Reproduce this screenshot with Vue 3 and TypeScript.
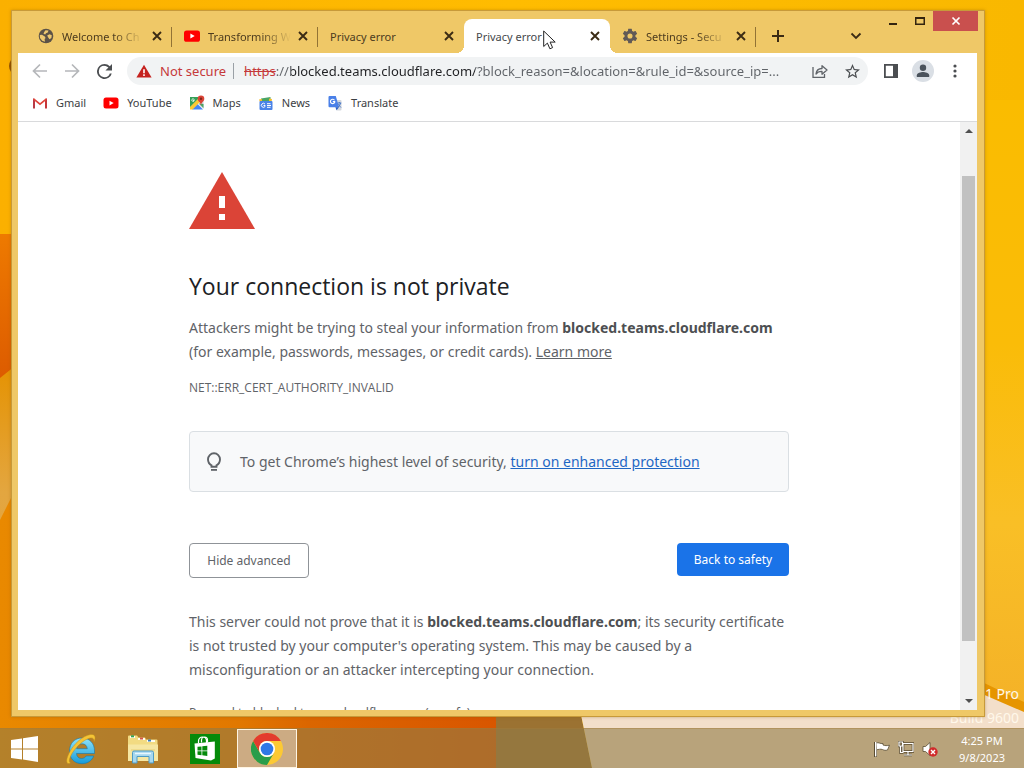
<script setup lang="ts">
interface Tab {
  title: string
  icon: 'globe' | 'youtube' | 'gear' | null
  active?: boolean
  divider?: boolean
}

const tabs: Tab[] = [
  { title: 'Welcome to Ch', icon: 'globe', divider: true },
  { title: 'Transforming W', icon: 'youtube', divider: true },
  { title: 'Privacy error', icon: null },
  { title: 'Privacy error', icon: null, active: true },
  { title: 'Settings - Secu', icon: 'gear', divider: true },
]

const bookmarks = ['Gmail', 'YouTube', 'Maps', 'News', 'Translate']
const address = '://blocked.teams.cloudflare.com/?block_reason=&location=&rule_id=&source_ip=...'
</script>

<template>
  <div class="desktop">
    <svg class="wallpaper" viewBox="0 0 1024 768" preserveAspectRatio="none" aria-hidden="true">
      <defs>
        <linearGradient id="sky" x1="0" y1="0" x2="1" y2="0">
          <stop offset="0" stop-color="#fbb000" />
          <stop offset=".5" stop-color="#ffbc00" />
          <stop offset="1" stop-color="#f9b800" />
        </linearGradient>
        <linearGradient id="glow" x1="0" y1="0" x2="0" y2="1">
          <stop offset="0" stop-color="#fabc00" />
          <stop offset=".4" stop-color="#fabc08" />
          <stop offset=".7" stop-color="#f9bf26" />
          <stop offset="1" stop-color="#f4b228" />
        </linearGradient>
        <linearGradient id="leaf" x1="0" y1="0" x2="0" y2="1">
          <stop offset="0" stop-color="#ee7a00" />
          <stop offset="1" stop-color="#dc5a00" />
        </linearGradient>
        <linearGradient id="low" x1="0" y1="0" x2="0" y2="1">
          <stop offset="0" stop-color="#e59200" />
          <stop offset=".55" stop-color="#e3a640" />
          <stop offset="1" stop-color="#e5a23c" />
        </linearGradient>
        <linearGradient id="floor" x1="0" y1="0" x2="1" y2="0">
          <stop offset="0" stop-color="#e98900" />
          <stop offset=".48" stop-color="#e17800" />
          <stop offset=".62" stop-color="#db6600" />
          <stop offset="1" stop-color="#d95600" />
        </linearGradient>
      </defs>
      <rect width="1024" height="768" fill="url(#sky)" />
      <path d="M0 234 L20 234 V371 L0 384Z" fill="url(#leaf)" />
      <path d="M0 378 L20 362 V600 H0Z" fill="url(#low)" />
      <path d="M0 520 L20 480 V712 H497 V768 H0Z" fill="url(#floor)" />
      <path d="M11 60 q-4 6 0 12z" fill="#915000" />
      <path d="M496 710 H580 L592 768 H496Z" fill="#9b7232" />
      <path d="M578 700 H970 V670 H1024 V768 H592Z" fill="#f3dfca" />
      <path d="M980 100 H1024 V706 L980 690Z" fill="url(#glow)" />
      <path d="M980 681 L1024 702 V712 L980 693Z" fill="#e69500" />
    </svg>

    <div class="watermark"><span>Windows 8.1 Pro</span><span>Build 9600</span></div>

    <main class="window">
      <header class="titlebar">
        <div class="tabs" role="tablist">
          <div v-for="(tab, i) in tabs" :key="i" class="tab" :class="{ active: tab.active, divider: tab.divider }">
            <button class="tab-main" role="tab" :aria-selected="!!tab.active">
              <svg v-if="tab.icon === 'globe'" class="fav" viewBox="0 0 16 16">
                <circle cx="8" cy="8" r="7.3" fill="#5b5247" />
                <path d="M1.800 7 4 6.800 6.800 8.500 7.600 10 6.600 11 7 13.800 4.200 12.800 2 10Z M7.500 2.200 10.500 2.600 9.800 4.600 8 5.200 7.200 6.500 5.500 5.800 6.200 4Z M9.200 7.600 11.500 6.200 13.800 7.200 13.400 10 11.500 11.200 10.200 9.600Z" fill="#edc870" />
              </svg>
              <svg v-else-if="tab.icon === 'youtube'" class="fav" viewBox="0 0 16 16">
                <rect y="2.4" width="16" height="11.4" rx="2.6" fill="#f00" />
                <path d="M6.4 5.6v5l4.3-2.5z" fill="#fff" />
              </svg>
              <svg v-else-if="tab.icon === 'gear'" class="fav" viewBox="1 1 22 22">
                <path fill="#625a56" d="M19.43 12.98c.04-.32.07-.64.07-.98s-.03-.66-.07-.98l2.11-1.65c.19-.15.24-.42.12-.64l-2-3.46c-.12-.22-.39-.3-.61-.22l-2.49 1c-.52-.4-1.08-.73-1.69-.98l-.38-2.65A.49.49 0 0 0 14 2h-4c-.25 0-.46.18-.49.42l-.38 2.65c-.61.25-1.17.59-1.69.98l-2.49-1c-.23-.09-.49 0-.61.22l-2 3.46c-.13.22-.07.49.12.64l2.11 1.65c-.04.32-.07.65-.07.98s.03.66.07.98l-2.11 1.65c-.19.15-.24.42-.12.64l2 3.46c.12.22.39.3.61.22l2.49-1c.52.4 1.08.73 1.69.98l.38 2.65c.03.24.24.42.49.42h4c.25 0 .46-.18.49-.42l.38-2.65c.61-.25 1.17-.59 1.69-.98l2.49 1c.23.09.49 0 .61-.22l2-3.46c.12-.22.07-.49-.12-.64zM12 15.500a3.500 3.500 0 1 1 0-7 3.500 3.500 0 0 1 0 7z" />
              </svg>
              <span class="tab-title" :class="{ faded: tab.icon }">{{ tab.title }}</span>
            </button>
            <button class="tab-close" :aria-label="`Close ${tab.title}`">
              <svg viewBox="0 0 10 10" width="10" height="10"><path d="M1 1l8 8M9 1L1 9" stroke="currentColor" stroke-width="1.9" /></svg>
            </button>
          </div>
        </div>
        <button class="new-tab" aria-label="New tab">
          <svg viewBox="0 0 12 12" width="12" height="12"><path d="M6 0v12M0 6h12" stroke="#3b2b14" stroke-width="2" /></svg>
        </button>
        <button class="search-tabs" aria-label="Search tabs">
          <svg viewBox="0 0 12 8" width="12" height="8"><path d="M1.5 1.5 6 6l4.500-4.500" fill="none" stroke="#3b2b14" stroke-width="1.800" /></svg>
        </button>
        <div class="controls">
          <button aria-label="Minimize"><svg viewBox="0 0 12 10" width="12" height="10"><path d="M2 7h8v2H2z" fill="#33240f" /></svg></button>
          <button aria-label="Maximize"><svg viewBox="0 0 12 10" width="12" height="10"><path d="M1 1h10v8H1zM2.500 3v4.500h7V3z" fill="#33240f" fill-rule="evenodd" /></svg></button>
          <button class="close" aria-label="Close"><svg viewBox="0 0 10 10" width="10" height="10"><path d="M1.500 1.500l7 7M8.500 1.500l-7 7" stroke="#fff" stroke-width="1.700" /></svg></button>
        </div>
      </header>

      <div class="client">
        <nav class="toolbar">
          <button class="tool" aria-label="Back"><svg viewBox="0 0 16 16" width="16" height="16"><path d="M15 8H2M8 1.500 1.500 8 8 14.500" fill="none" stroke="#b5b7ba" stroke-width="1.700" /></svg></button>
          <button class="tool" aria-label="Forward"><svg viewBox="0 0 16 16" width="16" height="16"><path d="M1 8h13M8 1.500 14.500 8 8 14.500" fill="none" stroke="#b5b7ba" stroke-width="1.700" /></svg></button>
          <button class="tool" aria-label="Reload"><svg viewBox="4 4 16 16" width="15" height="15"><path fill="#4b4e51" d="M17.650 6.350A7.960 7.960 0 0 0 12 4a8 8 0 1 0 7.730 10h-2.080A6 6 0 1 1 12 6c1.660 0 3.140.690 4.220 1.780L13 11h7V4z" /></svg></button>
          <div class="omnibox">
            <button class="insecure">
              <svg viewBox="0 0 16 14" width="16" height="14"><path d="M8 .8 15.600 13.500H.4z" fill="#c5221f" /><path d="M7.200 5.300h1.600v4H7.200zM7.200 10.300h1.600v1.600H7.200z" fill="#fff" /></svg>
              <span>Not secure</span>
            </button>
            <span class="scheme">https</span>
            <input class="address" type="text" :value="address" aria-label="Address and search bar" spellcheck="false" />
            <button class="tool" aria-label="Share"><svg viewBox="0 0 16 16" width="16" height="16" fill="none" stroke="#5f6368" stroke-width="1.300"><path d="M1 4v10.300h11.500V11" /><path d="M4 11c.4-3.500 2.500-5.400 6-5.500V2.700L15 7l-5 4.200V8.400C7.300 8.300 5.500 9 4 11z" stroke-linejoin="round" /></svg></button>
            <button class="tool" aria-label="Bookmark this tab"><svg viewBox="2 2 20 20" width="15" height="15"><path fill="#4b4e51" d="m22 9.240-7.190-.620L12 2 9.190 8.630 2 9.240l5.460 4.730L5.820 21 12 17.270 18.180 21l-1.630-7.030zM12 15.400l-3.760 2.270 1-4.280-3.320-2.880 4.380-.380L12 6.100l1.710 4.040 4.380.380-3.320 2.880 1 4.280z" /></svg></button>
          </div>
          <button class="tool" aria-label="Side panel"><svg viewBox="0 0 14 14" width="14" height="14"><path d="M0 0h14v14H0zM1.800 1.800v10.400H9V1.800z" fill="#4b4e51" fill-rule="evenodd" /></svg></button>
          <button class="tool" aria-label="Profile"><svg viewBox="0 0 22 22" width="22" height="22"><circle cx="11" cy="11" r="11" fill="#dadfe5" /><circle cx="11" cy="7.800" r="3.200" fill="#4b535c" /><path d="M4.800 17v-1.700c0-2.100 4.100-3.200 6.200-3.200s6.200 1.100 6.200 3.200V17z" fill="#4b535c" /></svg></button>
          <button class="tool" aria-label="Menu"><svg viewBox="0 0 4 14" width="4" height="14" fill="#4b4e51"><circle cx="2" cy="2" r="1.600" /><circle cx="2" cy="7" r="1.600" /><circle cx="2" cy="12" r="1.600" /></svg></button>
        </nav>

        <nav class="bookmarks">
          <a v-for="name in bookmarks" :key="name" href="#">
            <svg v-if="name === 'Gmail'" viewBox="0 0 16 16"><path d="M1 13.500V3.500h1L3 5v8.500z" fill="#b93a45" /><path d="M15 13.500V3.500h-1L13 5v8.500z" fill="#c5363a" /><path d="M1.500 3.900 8 9.200l6.500-5.300" fill="none" stroke="#e0453b" stroke-width="1.700" /></svg>
            <svg v-else-if="name === 'YouTube'" viewBox="0 0 16 16"><rect x=".5" y="2.600" width="15" height="11" rx="2.500" fill="#f00" /><path d="M6.500 5.700v4.800l4.200-2.400z" fill="#fff" /></svg>
            <svg v-else-if="name === 'Maps'" viewBox="0 0 16 16"><path d="M1 2h10.500L1 12.500z" fill="#35a058" /><path d="M14.500 5v9L9 9z" fill="#cfd4da" /><path d="M3 14.500 8.500 9l5.500 5.500z" fill="#4285f4" /><path d="M1 12 10 3l2.500 2.500L3.500 14.500H1z" fill="#fbc932" /><path d="M10 8.500 14.500 13V9z" fill="#4aa564" /><path d="M12 .5a3.300 3.300 0 0 1 3.300 3.300C15.300 6.500 12.400 7 12 10.500 11.600 7 8.700 6.500 8.700 3.800A3.300 3.300 0 0 1 12 .5z" fill="#db4437" /><circle cx="12" cy="3.800" r="1.200" fill="#80261c" /><path d="M6 5H4.500v.9h.6A1.300 1.300 0 1 1 4.800 4" fill="none" stroke="#fff" stroke-width=".8" /></svg>
            <svg v-else-if="name === 'News'" viewBox="0 0 16 16"><path d="M3 3.500 12.500 2V6H3z" fill="#4aa564" /><path d="M1 4.500l3-.5v3H2zM11 3.500l3 .5-.5 3H11z" fill="#f6bd2a" /><rect x="1.500" y="6" width="13" height="9" rx="1" fill="#4a83e8" /><path d="M7 9.100A2 2 0 1 0 7.100 11.400V10.500H5.500M9 8.700h3.500M9 10.500h4M9 12.300h3.500" fill="none" stroke="#fff" stroke-width="1" /></svg>
            <svg v-else viewBox="0 0 16 16"><path d="M6 5h7.500a1 1 0 0 1 1 1v8.500a1 1 0 0 1-1 1H9.500z" fill="#d3d8de" /><path d="M2.500 1h6.300L12 12.200H2.500a1 1 0 0 1-1-1V2a1 1 0 0 1 1-1z" fill="#4a80e8" /><path d="M8.500 12.200H12L9.500 15.300z" fill="#2b5fc7" /><path d="M7.500 5.200A2.200 2.200 0 1 0 7.700 7.200V6.600H5.800" fill="none" stroke="#fff" stroke-width="1.100" /><path d="M10.500 8h3.800M12.300 7v1M13.600 8c-.4 1.800-1.300 3-2.400 4M11.500 9c.5 1.500 1.300 2.600 2.500 3.500" fill="none" stroke="#4a78c8" stroke-width="1" /></svg>
            <span>{{ name }}</span>
          </a>
        </nav>

        <div class="viewport">
          <article class="page">
            <div class="interstitial">
              <svg class="warning" viewBox="0 0 66 58" width="66" height="58"><path d="M33 0 66 57H0z" fill="#db4437" /><path d="M30 24h6v12h-6zM30 42h6v6h-6z" fill="#fff" /></svg>
              <h1>Your connection is not private</h1>
              <p>Attackers might be trying to steal your information from <strong>blocked.teams.cloudflare.com</strong><br />(for example, passwords, messages, or credit cards). <a href="#">Learn more</a></p>
              <p class="code">NET::ERR_CERT_AUTHORITY_INVALID</p>
              <div class="tip">
                <svg viewBox="0 0 14 20" width="14" height="20"><path d="M4.500 13.300C2.300 12.200 1 10.300 1 7.300a6 6 0 0 1 12 0c0 3-1.300 4.900-3.500 6v1.500h-5z" fill="none" stroke="#5f6368" stroke-width="1.900" /><path d="M4 17h6v1.800H4z" fill="#5f6368" /></svg>
                <span>To get Chrome’s highest level of security, <a href="#">turn on enhanced protection</a></span>
              </div>
              <div class="actions">
                <button class="secondary">Hide advanced</button>
                <button class="primary">Back to safety</button>
              </div>
              <p>This server could not prove that it is <strong>blocked.teams.cloudflare.com</strong>; its security certificate<br />is not trusted by your computer's operating system. This may be caused by a<br />misconfiguration or an attacker intercepting your connection.</p>
              <p class="proceed"><a href="#">Proceed to blocked.teams.cloudflare.com (unsafe)</a></p>
            </div>
          </article>
          <div class="scrollbar">
            <button aria-label="Scroll up"><svg viewBox="0 0 8 4" width="8" height="4"><path d="M4 0 8 4H0z" fill="#505050" /></svg></button>
            <div class="track"><div class="thumb"></div></div>
            <button aria-label="Scroll down"><svg viewBox="0 0 8 4" width="8" height="4"><path d="M0 0h8L4 4z" fill="#505050" /></svg></button>
          </div>
        </div>
      </div>
    </main>

    <footer class="taskbar">
      <button class="start" aria-label="Start"><svg viewBox="0 0 27 26" width="27" height="26" fill="#fff"><path d="M0 4 11 2.400V12.400H0zM12 2.200 27 0V12.400H12zM0 13.400h11v10L0 22zM12 13.400h15V26L12 23.600z" /></svg></button>
      <button class="app" aria-label="Internet Explorer">
        <svg viewBox="0 0 32 32" width="32" height="32">
          <defs><linearGradient id="ie" x1="0" y1="0" x2="0" y2="1"><stop offset="0" stop-color="#8fe3fb" /><stop offset="1" stop-color="#169bd9" /></linearGradient></defs>
          <path d="M29.500 20.500H11.500c.2 3.200 2.200 5 5 5 2.200 0 3.800-1 4.600-2.500h7.600c-1.700 4.500-6 7.700-11.700 7.700C9.500 30.700 4.500 25.500 4.500 17.900 4.500 10.300 9.800 5 17 5c7.700 0 12.600 5.500 12.500 13zM22.300 15.700c-.2-2.900-2.200-4.900-5.300-4.900-3 0-5 1.900-5.400 4.900z" fill="url(#ie)" stroke="#1579ab" stroke-width=".6" />
          <path d="M5.500 30C1 32.500.5 27 4 20.300 8.500 11 18 2.500 25.500 1.500 30.500.8 31 4.500 29 9c.4-3.500-1.500-4.700-4.800-3.700C18 7.200 11 14 7 20.600 4.200 25.500 3.500 29 5.500 30z" fill="#f5c435" stroke="#bd8c1c" stroke-width=".5" />
        </svg>
      </button>
      <button class="app" aria-label="File Explorer">
        <svg viewBox="0 0 32 30" width="32" height="30">
          <path d="M1 2.500Q1 1.500 2 1.500h8l1.500 2H18l1 2h10.500q1 0 1 1V26H1z" fill="#f2db82" />
          <path d="M3 3h5M11 5h7M20 7h8" stroke="#fffdf0" stroke-width="2" /><path d="M4 2.300h3" stroke="#36a455" stroke-width="2" /><path d="M13 4.500h3" stroke="#d4564a" stroke-width="2" /><path d="M21 6.500h3" stroke="#3b7dbb" stroke-width="2" />
          <path d="M1 10.500h30V27H1z" fill="#f6e7a3" /><path d="M4 16h24" stroke="#e6ce74" />
          <path d="M5.500 29V18.500q0-1.500 1.500-1.500h18q1.500 0 1.500 1.500V29h-4.500v-6.500H10V29z" fill="#a6d7ef" stroke="#4e9bc4" stroke-width="1" /><path d="M8 19.500h16" stroke="#e8f7fe" stroke-width="1.500" />
        </svg>
      </button>
      <button class="app" aria-label="Store">
        <svg viewBox="0 0 30 30" width="30" height="30"><path d="M0 0h30v30H0z" fill="#058a0a" /><path d="M4.500 9.500 24.800 7.500V24.500L21 26.500 5.500 24z" fill="#fff" /><path d="M8.500 9V7a4 4 0 0 1 8 0v2M11.500 8.500V6a3 3 0 0 1 6 0v2.500" fill="none" stroke="#fff" stroke-width="1.200" /><path d="M7.500 12.800l4-.4v4h-4zM12.300 12.300l5-.5v4.600h-5zM7.500 17.200h4v4l-4-.4zM12.300 17.200h5v4.700l-5-.6z" fill="#058a0a" /></svg>
      </button>
      <button class="app running" aria-label="Google Chrome">
        <svg viewBox="0 0 32 32" width="32" height="32"><circle cx="16" cy="16" r="16" fill="#fcc934" /><path d="M2.140 8A16 16 0 0 0 16 32l6.930-12A8 8 0 0 1 9.070 20z" fill="#2a9d4a" /><path d="M16 8h13.860A16 16 0 0 0 2.140 8L9.070 20A8 8 0 0 1 16 8z" fill="#e33b2e" /><circle cx="16" cy="16" r="8" fill="#fff" /><circle cx="16" cy="16" r="6.300" fill="#2f78e6" /></svg>
      </button>
      <div class="tray">
        <button aria-label="Action Center"><svg viewBox="0 0 16 16" width="16" height="16"><path d="M1.500 1v15" stroke="#594c33" stroke-width="3" /><path d="M2 2c3-1 4 1 7 .5V4c2 .8 4 .8 6.500.2L13.500 9c-2 .5-3 .5-5-.5-2-.7-4 0-6 .3z" fill="#fff" stroke="#594c33" stroke-width=".8" /><path d="M1.700 1v14.500" stroke="#fff" stroke-width="1.400" /></svg></button>
        <button aria-label="Network"><svg viewBox="0 0 16 16" width="16" height="16" fill="none"><path d="M5 2.500h10v8H5zM10 10.500V14M6 14h8M2.500 5v6.500h3M1 1h3.500v4H1z" stroke="#594c33" stroke-width="2.600" /><path d="M5 2.500h10v8H5zM10 10.500V14M6 14h8M2.500 5v6.500h3M1 1h3.500v4H1z" stroke="#fff" stroke-width="1.200" /></svg></button>
        <button aria-label="Volume muted"><svg viewBox="0 0 16 16" width="16" height="16"><path d="M1 5.500h2.500L8 1.500v13L3.500 10.500H1z" fill="#fff" stroke="#594c33" stroke-width=".8" /><circle cx="11" cy="11" r="4.700" fill="#d02b2b" /><path d="m9 9 4 4M13 9l-4 4" stroke="#fff" stroke-width="1.400" /></svg></button>
      </div>
      <time class="clock" datetime="2023-09-08T16:25"><span>4:25 PM</span><span>9/8/2023</span></time>
    </footer>

    <svg class="cursor" viewBox="0 0 13 20" width="13" height="20" aria-hidden="true"><path d="M.7 1v15.500l3.700-3.400 2.500 5.700 2.700-1.200-2.500-5.500h5.100z" fill="#fff" stroke="#222" stroke-width="1" /></svg>
  </div>
</template>

<style>
html,
body,
#app {
  height: 100%;
}
body {
  margin: 0;
  overflow: hidden;
}
</style>

<style scoped>
.desktop {
  position: relative;
  display: flex;
  flex-direction: column;
  height: 100vh;
  overflow: hidden;
  font-family: "Noto Sans", "Open Sans", sans-serif;
  font-size: 11px;
  color: #3c4043;
}
.desktop * {
  box-sizing: border-box;
}
svg {
  display: block;
  flex: none;
}
button {
  display: flex;
  align-items: center;
  justify-content: center;
  padding: 0;
  border: 0;
  background: none;
  font: inherit;
  color: inherit;
}
.wallpaper {
  position: absolute;
  inset: 0;
  width: 100%;
  height: 100%;
}
.watermark {
  position: absolute;
  right: 5px;
  bottom: 38px;
  display: flex;
  flex-direction: column;
  align-items: flex-end;
  font-size: 14px;
  line-height: 24px;
  color: #fff8ea;
}
.window {
  position: relative;
  display: flex;
  flex: 1;
  flex-direction: column;
  min-height: 0;
  margin: 10px 39px 11px 11px;
  padding-bottom: 6px;
  border: 1px solid #c79a3a;
  background: #efc867;
  box-shadow: 0 0 3px #8a5a0066;
}
.titlebar {
  display: flex;
  flex: none;
  align-items: flex-end;
  height: 42px;
  padding: 0 6px 0 14px;
}
.tabs {
  display: flex;
}
.tab {
  position: relative;
  display: flex;
  align-items: center;
  width: 146px;
  height: 34px;
  padding: 0 10px 0 12px;
  color: #4c3b1e;
}
.tab.divider::after {
  content: "";
  position: absolute;
  top: 8px;
  right: 0;
  width: 1px;
  height: 20px;
  background: #927335;
}
.tab.active {
  border-radius: 8px 8px 0 0;
  background: #fff;
  color: #45484b;
}
.tab.active::before,
.tab.active::after {
  content: "";
  position: absolute;
  bottom: 0;
  width: 8px;
  height: 8px;
}
.tab.active::before {
  left: -8px;
  background: radial-gradient(circle at 0 0, transparent 8px, #fff 8px);
}
.tab.active::after {
  right: -8px;
  background: radial-gradient(circle at 100% 0, transparent 8px, #fff 8px);
}
.tab-main {
  flex: 1;
  justify-content: flex-start;
  gap: 8px;
  min-width: 0;
}
.fav {
  width: 16px;
  height: 16px;
}
.tab-title {
  flex: 1;
  text-align: left;
  white-space: nowrap;
}
.faded {
  mask-image: linear-gradient(to right, #000 calc(100% - 30px), transparent);
}
.tab-close {
  width: 10px;
  height: 20px;
  margin-left: 9px;
  color: #3b2b14;
}
.new-tab {
  width: 28px;
  height: 34px;
  margin-left: 8px;
}
.search-tabs {
  width: 28px;
  height: 34px;
  margin-right: 9px;
  margin-left: auto;
}
.controls {
  display: flex;
  align-self: flex-start;
}
.controls button {
  width: 27px;
  height: 20px;
}
.controls .close {
  width: 45px;
  background: #c9504e;
}
.client {
  display: flex;
  flex: 1;
  flex-direction: column;
  min-height: 0;
  margin: 0 7px 0 6px;
  background: #fff;
}
.toolbar {
  display: flex;
  flex: none;
  align-items: center;
  height: 36px;
  padding: 0 6px;
}
.tool {
  flex: none;
  width: 32px;
  height: 28px;
}
.omnibox {
  display: flex;
  flex: 1;
  align-items: center;
  min-width: 0;
  height: 28px;
  margin: 0 7px;
  padding-left: 9px;
  border-radius: 14px;
  background: #f1f3f4;
  font-size: 13px;
}
.insecure {
  flex: none;
  gap: 8px;
  margin-right: 10px;
  padding-right: 7px;
  border-right: 1px solid #9aa0a6;
  line-height: 16px;
  color: #c5393a;
}
.scheme {
  color: #c5393a;
  text-decoration: line-through;
}
.address {
  flex: 1;
  min-width: 0;
  padding: 0;
  border: 0;
  outline: 0;
  background: linear-gradient(to right, #5f6368 15px, #202124 15px 199px, #5f6368 199px);
  background-clip: text;
  font: inherit;
  color: transparent;
  text-overflow: ellipsis;
}
.bookmarks {
  display: flex;
  flex: none;
  align-items: center;
  gap: 17px;
  height: 33px;
  padding: 0 14px 5px;
  border-bottom: 1px solid #d9dadc;
}
.bookmarks a {
  display: flex;
  align-items: center;
  gap: 8px;
  color: #3c4043;
  text-decoration: none;
}
.bookmarks svg {
  width: 16px;
  height: 16px;
}
.viewport {
  display: flex;
  flex: 1;
  min-height: 0;
}
.page {
  flex: 1;
  min-width: 0;
  overflow: hidden;
}
.interstitial {
  max-width: 600px;
  margin: 0 auto;
  padding-top: 50px;
  font-size: 14px;
  line-height: 24px;
  color: #5f6368;
}
h1 {
  margin: 40px 0 14px;
  font-family: "Open Sans", "Noto Sans", sans-serif;
  font-size: 23px;
  font-weight: 400;
  line-height: 32px;
  color: #202124;
}
p {
  margin: 0;
}
p a {
  color: inherit;
}
strong {
  color: #4d4f52;
}
.code {
  margin-top: 12px;
  font-family: "Open Sans", "Noto Sans", sans-serif;
  font-size: 12px;
}
.tip {
  display: flex;
  align-items: center;
  gap: 19px;
  height: 61px;
  margin-top: 31px;
  padding: 0 17px;
  border: 1px solid #dadfe3;
  border-radius: 4px;
  background: #f8f9fa;
}
.tip a {
  color: #1f67c4;
}
.actions {
  display: flex;
  align-items: flex-start;
  justify-content: space-between;
  margin: 51px 0 32px;
  font-size: 12px;
}
.actions button {
  border-radius: 4px;
}
.secondary {
  width: 120px;
  height: 35px;
  border: 1px solid #8f9398;
}
.primary {
  width: 112px;
  height: 33px;
  background: #1a73e8;
  color: #fff;
}
.proceed {
  margin-top: 19px;
  font-size: 12px;
}
.scrollbar {
  display: flex;
  flex: none;
  flex-direction: column;
  width: 17px;
  background: #f1f1f1;
}
.scrollbar button {
  height: 18px;
}
.track {
  display: flex;
  flex: 1;
  flex-direction: column;
  padding: 36px 2px 51px;
}
.thumb {
  flex: 1;
  background: #c1c1c1;
}
.taskbar {
  position: relative;
  display: flex;
  flex: none;
  align-items: center;
  gap: 2px;
  height: 40px;
  border-top: 1px solid #a77b3566;
  background: #917b4699;
}
.start {
  width: 49px;
  height: 39px;
}
.app {
  width: 60px;
  height: 39px;
}
.running {
  border: 1px solid #fff5e3;
  background: #ccab83;
}
.tray {
  display: flex;
  gap: 8px;
  margin-left: auto;
}
.clock {
  display: flex;
  flex-direction: column;
  align-items: center;
  width: 84px;
  line-height: 17px;
  color: #fff;
}
.cursor {
  position: absolute;
  top: 30px;
  left: 543px;
}
</style>
